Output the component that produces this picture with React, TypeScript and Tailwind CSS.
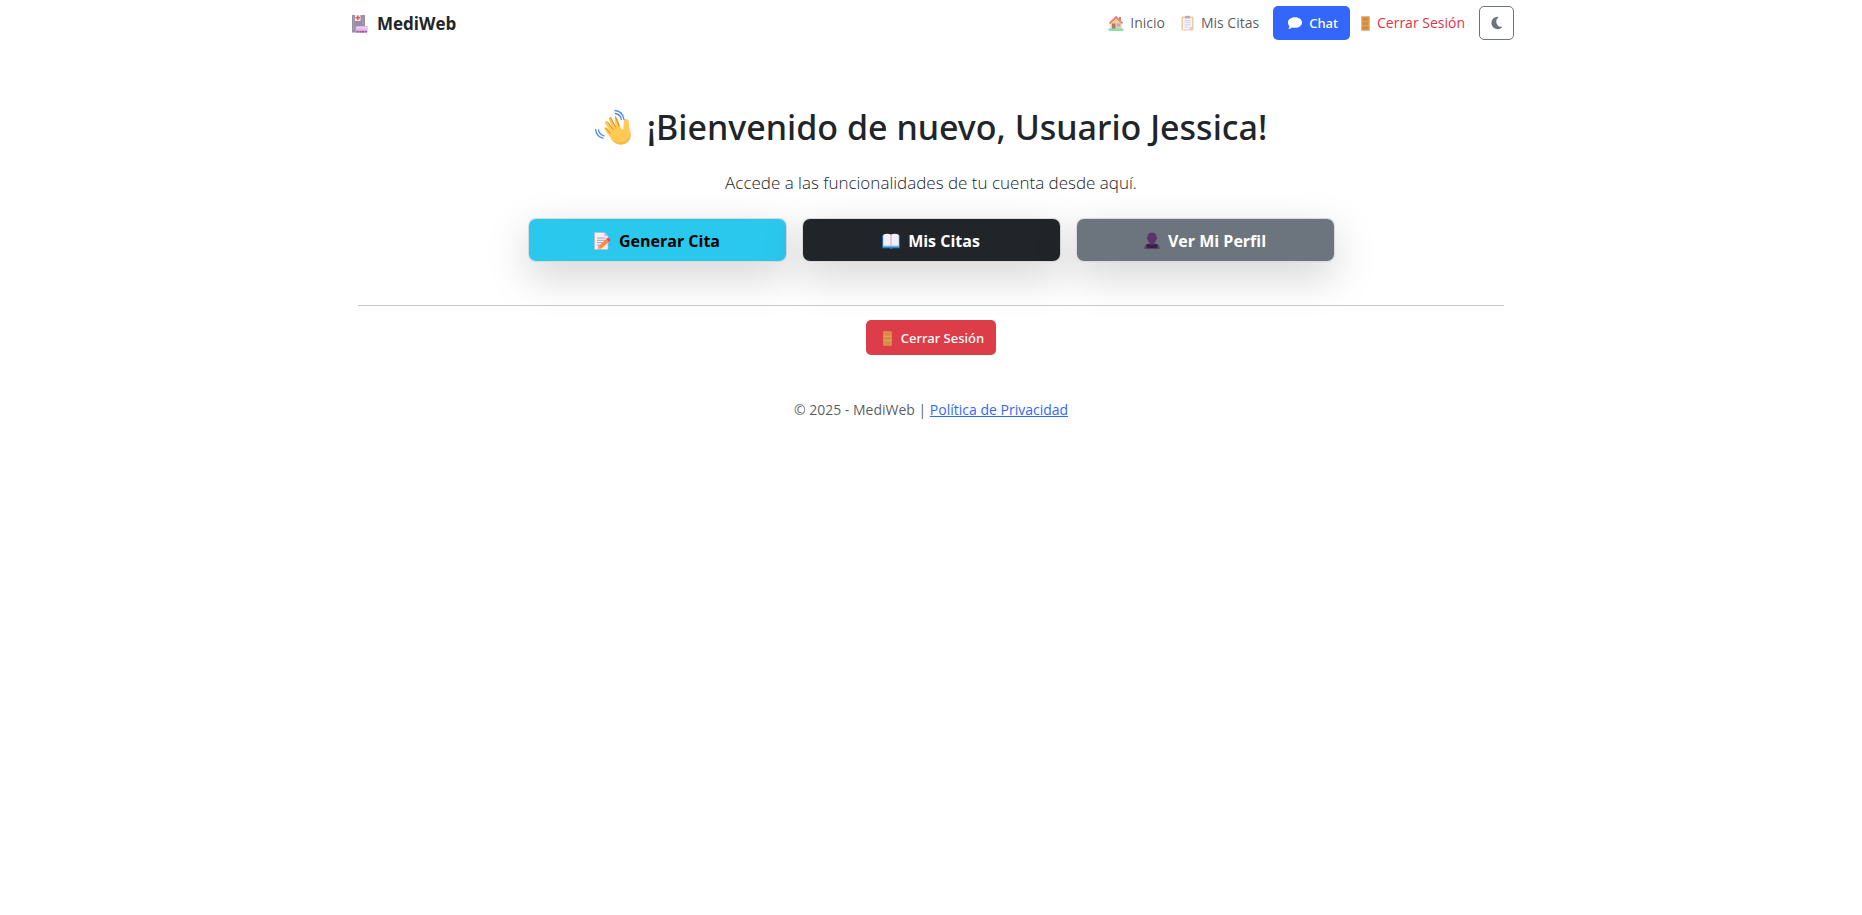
import type { ReactNode } from "react";

type IconProps = { className?: string };

function HospitalIcon({ className }: IconProps) {
  return (
    <svg viewBox="0 0 16 18" className={className} aria-hidden="true">
      <path d="M0 0h13v17.500H0z" fill="#998ea4" />
      <path d="M1 1.500h1.500v14H1zM10 1.500h1.500v8H10z" fill="#a79db2" />
      <path d="M3 0h5.500v6H3z" fill="#f5e8ee" />
      <path d="M4.900.6h1.700V2h1.400v1.600H6.600V5H4.900V3.600H3.500V2h1.400z" fill="#f0545f" />
      <path d="M3.500 11h12v6.500h-12z" fill="#d3a9dc" />
      <path d="M4.500 11.500h10.500v3H4.500z" fill="#e6cdf0" />
      <path d="M4.500 16h2v1.500h-2zM7.500 16h2v1.500h-2zM10 16h2v1.500h-2zM12.800 16h2v1.500h-2z" fill="#a9479f" />
    </svg>
  );
}

function HouseIcon({ className }: IconProps) {
  return (
    <svg viewBox="0 0 16 16" className={className} aria-hidden="true">
      <path d="M11 2h2v4h-2z" fill="#b4594e" />
      <path d="M2.500 7.500 8 2.500l5.500 5V14h-11z" fill="#f2ba78" />
      <path d="M8 .8 15.300 8l-1.400 1.100L8 3.600 2.100 9.100.7 8z" fill="#e9564b" />
      <path d="M4 8.500h3.500V14H4z" fill="#8b5148" />
      <path d="M9 8.500h3.200v3H9z" fill="#5da9e6" />
      <path d="M.5 13.500h15V16H.5z" fill="#61d79b" />
    </svg>
  );
}

function ClipboardIcon({ className }: IconProps) {
  return (
    <svg viewBox="0 0 13 16" className={className} aria-hidden="true">
      <rect x=".5" y="1.500" width="12" height="14" rx="1" fill="#eab987" />
      <path d="M2 3h9v9l-2.500 2.500H2z" fill="#f4eff9" />
      <path d="M11 12H8.500v2.500z" fill="#b9b0c5" />
      <path d="M4 .8h5v2.700H4z" fill="#9b93a6" />
      <path d="M3.500 5.500h6M3.500 7.700h6M3.500 9.900h6M3.500 12H7" stroke="#b9b2c5" strokeWidth=".8" />
    </svg>
  );
}

function DoorIcon({ className }: IconProps) {
  return (
    <svg viewBox="0 0 9 15" className={className} aria-hidden="true">
      <path d="M.3.3h8.400v14.400H.3z" fill="#e09a4b" />
      <path d="M1.500 1.500h6v3.200h-6zM1.500 6h6v3h-6zM1.500 10.300h6v3.200h-6z" fill="#cf8b48" />
      <path d="M.3 5.300h8.400M.3 9.700h8.400" stroke="#eaae5c" strokeWidth=".5" />
      <circle cx="7.700" cy="8" r=".5" fill="#f6c35d" />
    </svg>
  );
}

function ChatIcon({ className }: IconProps) {
  return (
    <svg viewBox="0 0 16 14" className={className} fill="currentColor" aria-hidden="true">
      <path d="M8 1.200c4 0 7.100 2.300 7.100 5.300S12 11.800 8 11.800c-1 0-2-.1-2.900-.4-.9.700-2.200 1.300-3.900 1.300.8-.8 1.200-1.700 1.400-2.500C1.500 9.200.9 8 .9 6.500.9 3.500 4 1.200 8 1.200z" />
    </svg>
  );
}

function MoonIcon({ className }: IconProps) {
  return (
    <svg viewBox="0 0 12 14" className={className} fill="currentColor" aria-hidden="true">
      <path d="M6.600.8a6.200 6.200 0 1 0 4.300 10.700c.3-.3.100-.7-.3-.7A5.200 5.200 0 0 1 7.200 1.600c.3-.2.200-.7-.1-.8z" />
    </svg>
  );
}

function WaveIcon({ className }: IconProps) {
  return (
    <svg viewBox="0 0 36 36" className={className} aria-hidden="true">
      <path
        d="M9.800 20.700c-1.200-1.700.8-3.300 2.200-1.900l2 2-3.800-6.300c-1.100-2 1.200-3.400 2.500-1.700l4.100 5.400-3-8c-.8-2.200 1.800-3.300 2.900-1.200l4 8-1.100-6.700c-.3-2.200 2.300-2.700 3-.6l3.200 9.200 2.400 1.900.7-8.600c.4-3.300 4.700-2.600 4.800.6.100 3.300.9 6.800 1.600 11.100.9 5.800-2.100 10.600-7.400 11.400-5.200.8-9.200-1.800-12.300-6.600z"
        fill="#ffc952"
      />
      <path d="M35 21.500c2 7-1 12.300-7.100 13.700-5 1.100-9-1.200-12.200-5.700 4.300 3.600 8.300 4.800 12.200 3.600 4.700-1.400 7.200-5 7.100-11.600z" fill="#f6b84a" />
      <path d="M12.800 13.200 18 20.300M15.400 8.700l5.100 9.400M20.300 7.500l3.800 9.500M10.500 19l4.800 5.200" stroke="#cf8b3f" strokeWidth="1" fill="none" strokeLinecap="round" />
      <path d="M20 1.500c5.300.6 8.200 3.800 9 9M20.300 4.500c3.700.6 5.500 2.600 6 6M.6 20.500c.4 4.500 3.200 7.600 7.400 8.600M3.400 20.800c.7 3.200 2.500 5.100 5.600 6.100" stroke="#4a86f0" strokeWidth="1.300" fill="none" strokeLinecap="round" />
    </svg>
  );
}

function MemoIcon({ className }: IconProps) {
  return (
    <svg viewBox="0 0 17 18" className={className} aria-hidden="true">
      <path d="M.5.5h9.800L14 4.300v13.200H.5z" fill="#f4eff9" stroke="#b9b4c6" strokeWidth=".7" />
      <path d="M10.300.5v3.800H14z" fill="#c9c1d6" />
      <path d="M3 6h8.500M3 8.300h8M3 10.600h6M3 13h3" stroke="#a49bb4" strokeWidth=".9" />
      <path d="m4.500 14.200 7.600-7.100 2.800 2.800-7.600 6.700-3.600.8z" fill="#ff8b3d" />
      <path d="m4.500 14.200 2.800 2.400-3.600.8z" fill="#e9b183" />
      <path d="m12.100 7.100 1-.9c1.900-1 4.200 1 2.900 2.800l-1.100.9z" fill="#fa3f68" />
    </svg>
  );
}

function BookIcon({ className }: IconProps) {
  return (
    <svg viewBox="0 0 18 16" className={className} aria-hidden="true">
      <path d="M.3 2.500h17.400v12.800h-7.200l-1.500.6-1.500-.6H.3z" fill="#2686c9" />
      <path d="M1 12.700h16v.9H1z" fill="#a6cce7" />
      <path d="M1.200 1.800C3.500.6 7 .5 9 1.700c2-1.200 5.500-1.100 7.800.1v10.900H1.200z" fill="#f4eff9" />
      <path d="M8.400 1.500h1.200v11.900H8.400z" fill="#c2b9d2" />
    </svg>
  );
}

function PersonIcon({ className }: IconProps) {
  return (
    <svg viewBox="0 0 16 17" className={className} aria-hidden="true">
      <path d="M8 .5c3 0 4.600 1.800 4.500 4.600.8.100.8 2-.2 2.500-.4 1.600-1.100 2.700-2.100 3.400v1.600H5.800V11c-1-.7-1.700-1.800-2.100-3.400-1-.5-1-2.400-.2-2.500C3.400 2.300 5 .5 8 .5z" fill="#5a3569" />
      <path d="M.5 16.500c0-3 1.800-4.800 4.500-4.800 1.800 1 4.200 1 6 0 2.700 0 4.500 1.800 4.500 4.800z" fill="#382044" />
      <path d="M.5 16.500c0-1.800.6-3 1.700-3.900l.8 3.900zM15.500 16.500c0-1.800-.6-3-1.700-3.900l-.8 3.900z" fill="#64427a" />
    </svg>
  );
}

function ActionButton({ color, icon, label }: { color: string; icon: ReactNode; label: string }) {
  return (
    <div className="rounded-lg border border-black/15 bg-white shadow-[0_14px_43px_rgba(0,0,0,0.175)]">
      <button
        type="button"
        className={`flex h-[42px] w-full items-center justify-center gap-2 rounded-[7px] pt-px text-base font-bold ${color}`}
      >
        {icon}
        {label}
      </button>
    </div>
  );
}

export default function App() {
  return (
    <div className="min-h-screen bg-white font-['Open_Sans','Noto_Sans',sans-serif] text-sm text-[#212529]">
      <header className="mx-auto flex max-w-[1188px] items-center justify-between px-[11px] py-[6px]">
        <a href="#inicio" className="flex items-center gap-[9px] pt-px pl-1 text-[17px] leading-6 font-bold">
          <HospitalIcon className="h-[18px] w-4" />
          MediWeb
        </a>
        <nav className="flex items-center">
          <a href="#inicio" className="flex items-center gap-[6px] px-2 text-[#212529]/75">
            <HouseIcon className="size-4 opacity-75" />
            Inicio
          </a>
          <a href="#citas" className="flex items-center gap-[7px] px-2 text-[#212529]/75">
            <ClipboardIcon className="h-4 w-[13px] opacity-75" />
            Mis Citas
          </a>
          <a href="#chat" className="ml-[6px] flex h-[34px] items-center gap-[6px] rounded-[5px] bg-[#3366fa] pr-3 pl-[14px] font-['Noto_Sans',sans-serif] text-[13px] font-medium text-white">
            <ChatIcon className="h-[14px] w-4" />
            Chat
          </a>
          <a href="#salir" className="ml-[3px] flex items-center gap-[7px] px-2 text-[#dc3545]">
            <DoorIcon className="h-[15px] w-[9px]" />
            Cerrar Sesión
          </a>
          <button
            type="button"
            aria-label="Cambiar tema"
            className="ml-[6px] flex h-[34px] w-[35px] items-center justify-center rounded-[5px] border border-[#6c757d] text-[#6c757d]"
          >
            <MoonIcon className="h-[14px] w-3" />
          </button>
        </nav>
      </header>

      <main className="mx-auto mt-[59px] flex max-w-[1188px] flex-col items-center px-[21px]">
        <h1 className="flex items-center gap-4 font-['Noto_Sans',sans-serif] text-[34px] leading-[44px] font-medium">
          <WaveIcon className="size-9" />
          ¡Bienvenido de nuevo, Usuario Jessica!
        </h1>
        <p className="mt-5 text-[17px] leading-[27px] font-light">
          Accede a las funcionalidades de tu cuenta desde aquí.
        </p>
        <div className="mt-[22px] grid w-full max-w-[807px] grid-cols-3 gap-[15px]">
          <ActionButton color="bg-[#2bc8ee] text-black" icon={<MemoIcon className="h-[18px] w-[17px]" />} label="Generar Cita" />
          <ActionButton color="bg-[#212529] text-white" icon={<BookIcon className="h-4 w-[18px]" />} label="Mis Citas" />
          <ActionButton color="bg-[#6c757d] text-white" icon={<PersonIcon className="h-[17px] w-4" />} label="Ver Mi Perfil" />
        </div>
        <hr className="mt-[43px] w-full border-t border-[#212529]/25" />
        <button
          type="button"
          className="mt-[14px] flex h-[35px] items-center gap-[9px] rounded-[5px] bg-[#dc3d48] pt-px pr-3 pl-[17px] font-['Noto_Sans',sans-serif] text-[13px] font-medium text-white"
        >
          <DoorIcon className="h-[15px] w-[9px]" />
          Cerrar Sesión
        </button>
      </main>

      <footer className="mt-11 text-center leading-[22px] text-[#212529]/75">
        © 2025 - MediWeb |{" "}
        <a href="#privacidad" className="text-[#3366fa] underline">
          Política de Privacidad
        </a>
      </footer>
    </div>
  );
}
